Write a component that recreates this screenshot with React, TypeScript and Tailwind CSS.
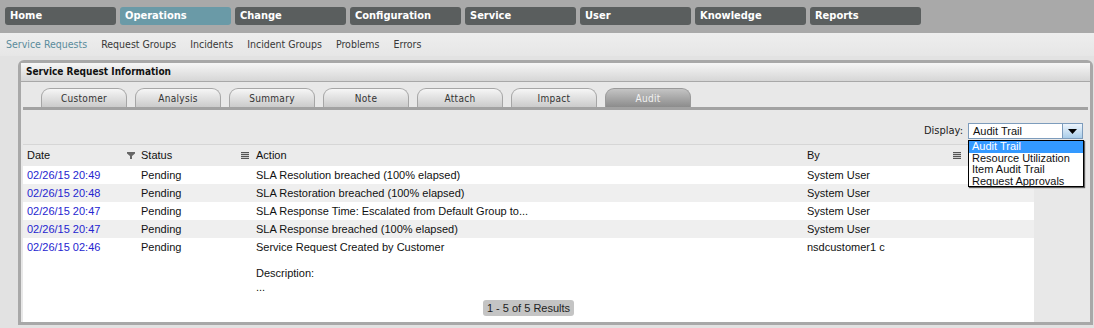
import React from "react";

const menu = ["Home", "Operations", "Change", "Configuration", "Service", "User", "Knowledge", "Reports"];
const subnav = ["Service Requests", "Request Groups", "Incidents", "Incident Groups", "Problems", "Errors"];
const tabs = ["Customer", "Analysis", "Summary", "Note", "Attach", "Impact", "Audit"];

const rows = [
  { date: "02/26/15 20:49", action: "SLA Resolution breached (100% elapsed)", by: "System User" },
  { date: "02/26/15 20:48", action: "SLA Restoration breached (100% elapsed)", by: "System User" },
  { date: "02/26/15 20:47", action: "SLA Response Time: Escalated from Default Group to...", by: "System User" },
  { date: "02/26/15 20:47", action: "SLA Response breached (100% elapsed)", by: "System User" },
];

function Funnel() {
  return (
    <svg width="8" height="7" viewBox="0 0 8 7" className="shrink-0">
      <path d="M0 0h8v1.5L5 4v3H3V4L0 1.5z" fill="#666" />
    </svg>
  );
}

function ListIcon() {
  return (
    <svg width="8" height="7" viewBox="0 0 8 7" className="shrink-0">
      <rect x="0" y="0" width="8" height="1.2" fill="#555" />
      <rect x="0" y="2" width="8" height="1.2" fill="#555" />
      <rect x="0" y="4" width="8" height="1.2" fill="#555" />
      <rect x="0" y="6" width="8" height="1" fill="#555" />
    </svg>
  );
}

export default function App() {
  return (
    <div className="relative w-[1094px] h-[328px] overflow-hidden bg-[#e2e2e2] font-['DejaVu_Sans_Condensed','DejaVu_Sans',sans-serif]">
      {/* top menu */}
      <div className="h-[33px] bg-[#a9a9a9] flex gap-[4px] pl-[5px] pt-[7px]">
        {menu.map((m) => (
          <div
            key={m}
            className={`w-[111px] h-[18px] rounded-[3px] pl-[5px] text-[11px] leading-[18px] font-bold text-white ${
              m === "Operations" ? "bg-[#6a9aa7]" : "bg-[#5a5e5e]"
            }`}
          >
            {m}
          </div>
        ))}
      </div>

      {/* sub nav */}
      <div className="h-[23px] bg-gradient-to-b from-[#eeeeee] to-[#e6e6e6] flex items-center gap-[14px] pl-[6px] text-[10.5px]">
        {subnav.map((s, i) => (
          <span key={s} className={i === 0 ? "text-[#5a8c9c]" : "text-[#383838]"}>
            {s}
          </span>
        ))}
      </div>

      {/* panel */}
      <div className="pl-[18px] pr-[1px] pt-[4px]">
        <div className="h-[265px] border-[3px] border-[#a8a8a8] rounded-t-[6px] flex flex-col bg-[#e8e8e8]">
          <div className="h-[19px] shrink-0 bg-gradient-to-b from-[#f6f6f6] to-[#d6d6d6] border-b border-[#a8a8a8] pl-[5px] text-[10px] leading-[18px] font-bold text-[#111]">
            Service Request Information
          </div>

          {/* tabs */}
          <div className="pt-[6px] flex gap-[8px] pl-[20px]">
            {tabs.map((t) => (
              <div
                key={t}
                className={`w-[86px] h-[19px] rounded-t-[9px] border border-b-0 text-center text-[10px] leading-[19px] tracking-[0.3px] ${
                  t === "Audit"
                    ? "border-[#9a9a9a] bg-gradient-to-b from-[#c4c4c4] to-[#8c8c8c] text-[#f2f2f2]"
                    : "border-[#a6a6a6] bg-gradient-to-b from-[#f6f6f6] to-[#cbcbcb] text-[#333]"
                }`}
              >
                {t}
              </div>
            ))}
          </div>
          <div className="mx-[2px] h-[3px] bg-[#a2a2a2]" />

          {/* display row */}
          <div className="h-[34px] shrink-0 flex items-start justify-end pr-[7px] pt-[13px] gap-[5px]">
            <span className="text-[11px] leading-[16px] text-[#222]">Display:</span>
            <div className="w-[115px] h-[16px] bg-white border border-[#7d9cbc] flex font-['Liberation_Sans',Arial,sans-serif]">
              <span className="flex-1 pl-[4px] text-[11px] leading-[14px] text-[#111]">Audit Trail</span>
              <div className="w-[20px] h-full border-l border-[#7d9cbc] bg-gradient-to-b from-[#eef5fc] to-[#a9cde9] flex items-center justify-center">
                <svg width="9" height="5" viewBox="0 0 9 5">
                  <path d="M0 0h9L4.5 5z" fill="#000" />
                </svg>
              </div>
            </div>
          </div>

          {/* table */}
          <div className="flex-1 flex pl-[2px] font-['Liberation_Sans',Arial,sans-serif] text-[11px] text-[#111]">
            <div className="w-[1011px] flex flex-col">
              <div className="h-[22px] shrink-0 flex items-center border-t border-[#d6d6d6] bg-[#ebebeb]">
                <div className="w-[114px] pl-[4px] pr-[2px] flex items-center justify-between">
                  <span>Date</span>
                  <Funnel />
                </div>
                <div className="w-[115px] pl-[4px] pr-[3px] flex items-center justify-between">
                  <span>Status</span>
                  <ListIcon />
                </div>
                <div className="w-[551px] pl-[4px]">Action</div>
                <div className="w-[162px] pl-[4px] pr-[4px] flex items-center justify-between">
                  <span>By</span>
                  <ListIcon />
                </div>
              </div>
              <div className="flex-1 bg-white flex flex-col">
                {rows.map((r, i) => (
                  <div key={i} className={`h-[18px] flex items-center ${i % 2 ? "bg-[#efefef]" : "bg-white"}`}>
                    <div className="w-[114px] pl-[4px] text-[#2525d0]">{r.date}</div>
                    <div className="w-[115px] pl-[4px]">Pending</div>
                    <div className="w-[551px] pl-[4px]">{r.action}</div>
                    <div className="w-[162px] pl-[4px]">{r.by}</div>
                  </div>
                ))}
                <div className="h-[58px] flex">
                  <div className="w-[114px] pl-[4px] leading-[18px] text-[#2525d0]">02/26/15 02:46</div>
                  <div className="w-[115px] pl-[4px] leading-[18px]">Pending</div>
                  <div className="w-[551px] pl-[4px] flex flex-col">
                    <span className="leading-[18px]">Service Request Created by Customer</span>
                    <span className="mt-[10px] leading-[14px]">Description:</span>
                    <span className="leading-[14px]">...</span>
                  </div>
                  <div className="w-[162px] pl-[4px] leading-[18px]">nsdcustomer1 c</div>
                </div>
                <div className="mt-[4px] flex justify-center">
                  <div className="h-[16px] px-[4px] rounded-[3px] bg-[#c4c4c4] leading-[16px] text-[#222]">1 - 5 of 5 Results</div>
                </div>
              </div>
            </div>
            <div className="flex-1" />
          </div>
        </div>
      </div>

      {/* open dropdown list */}
      <div className="absolute left-[968px] top-[140px] w-[116px] h-[47px] bg-white border border-black shadow-[1px_1px_1px_rgba(0,0,0,0.6)] font-['Liberation_Sans',Arial,sans-serif] text-[11px] leading-[11.5px] text-[#111]">
        <div className="bg-[#3399ff] text-white pl-[3px]">Audit Trail</div>
        <div className="pl-[3px]">Resource Utilization</div>
        <div className="pl-[3px]">Item Audit Trail</div>
        <div className="pl-[3px]">Request Approvals</div>
      </div>
    </div>
  );
}
